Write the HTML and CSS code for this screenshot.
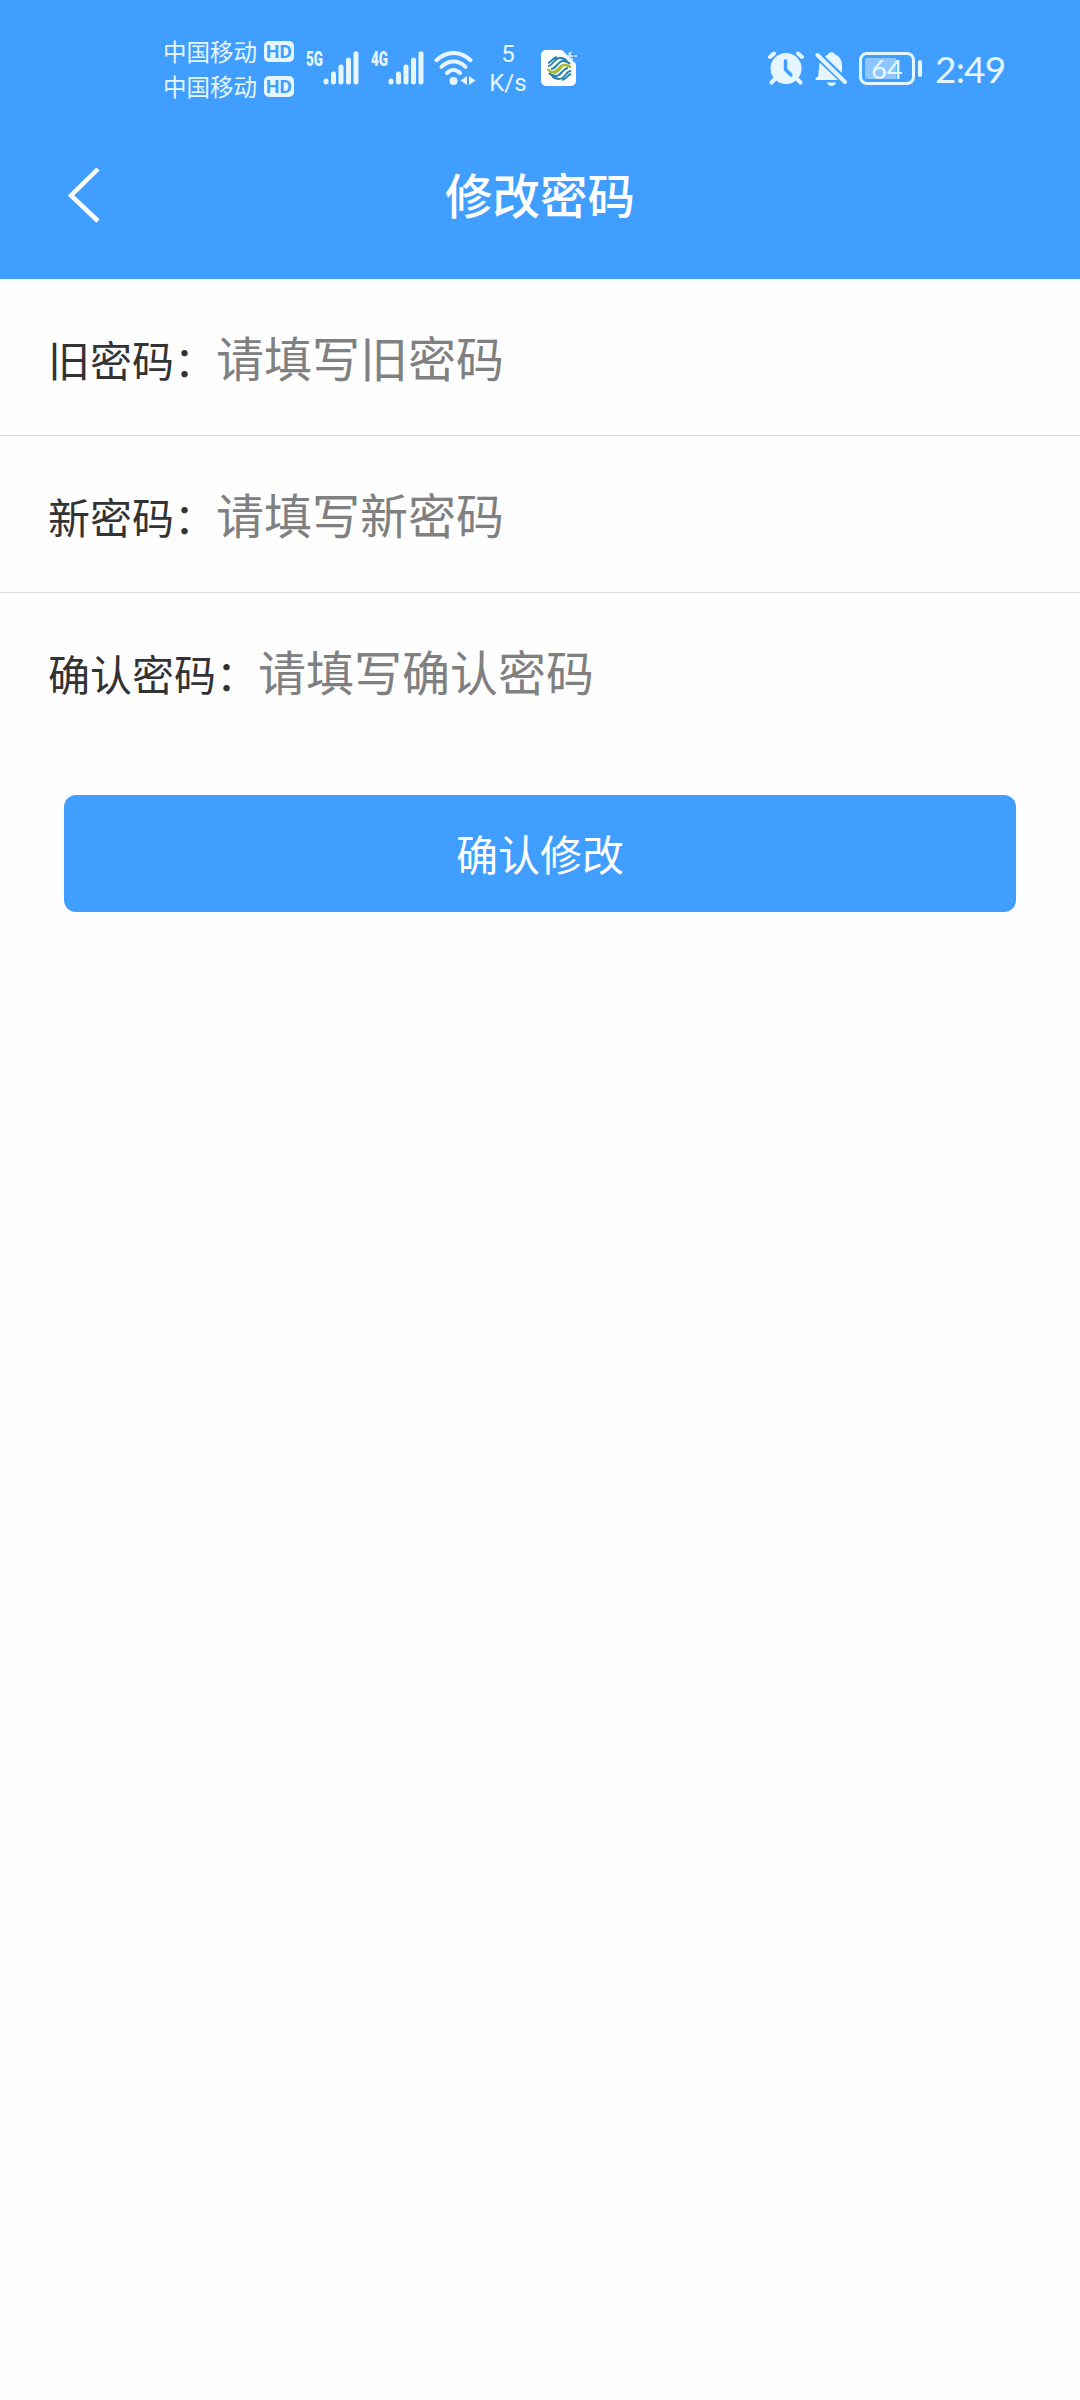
FILE: index.html
```html
<!DOCTYPE html>
<html lang="zh-CN">
<head>
<meta charset="utf-8">
<title>修改密码</title>
<link rel="stylesheet" href="styles.css">
</head>
<body>
<header class="header">
  <div class="status">
    <div class="carriers">
      <div class="carrier"><span>中国移动</span><b class="hd">HD</b></div>
      <div class="carrier"><span>中国移动</span><b class="hd">HD</b></div>
    </div>
    <div class="signal signal-5g">
      <span class="net">5G</span>
      <svg class="bars" width="36" height="34" viewBox="0 0 36 34"><path d="M3 30v1M10.500 23v8M18 16v15M25.500 9v22M33 2.800v28.200"/></svg>
    </div>
    <div class="signal signal-4g">
      <span class="net">4G</span>
      <svg class="bars" width="36" height="34" viewBox="0 0 36 34"><path d="M3 30v1M10.500 23v8M18 16v15M25.500 9v22M33 2.800v28.200"/></svg>
    </div>
    <svg class="wifi" width="42" height="34" viewBox="0 0 42 34">
      <g class="line"><path d="M2.500 9.200C13-.5 26-.5 36.500 9.200"/><path d="M7.500 15.800c7-7 17-7 24 0"/><path d="M13 22c4-4 9-4 13 0"/></g>
      <circle cx="19.500" cy="30" r="4"/><path d="M33 25v9l-6.500-4.500zM35 25v9l6.500-4.500z"/>
    </svg>
    <div class="speed"><span>5</span><span>K/s</span></div>
    <svg class="app" width="37" height="37" viewBox="0 0 37 37">
      <path fill="#fff" d="M6 0h16l14 14v17a5 5 0 0 1-5 5H6a5 5 0 0 1-5-5V5a5 5 0 0 1 5-5z"/>
      <g fill="none" stroke-width="1.900">
        <path stroke="#287fa8" d="M8 16c5 0 6-8 12-8 3 0 5 1 7 3M8 13c3 0 4-5 9-6M11 19c5 0 7-8 12-8 3 0 5 1 7 3M31 21c-5 0-6 8-12 8-3 0-5-1-7-3M31 24c-3 0-4 5-9 6M28 18c-5 0-7 8-12 8-3 0-5-1-7-3"/>
        <path stroke="#9fbd32" stroke-width="2.400" d="M8 19c2 4 6 4 9 1 4-4 5-5 8-5 3 0 4 2 6 2M13 23c5 0 6-4 9-6"/>
      </g>
      <path fill="none" stroke="#def2ff" stroke-width="1.300" d="M28 4l4-2M27 6h6M30 3v6M29 9h4M34 6h3"/>
    </svg>
    <svg class="alarm" width="36" height="34" viewBox="0 0 36 34">
      <circle cx="18" cy="17.500" r="15.500"/>
      <path class="line" d="M2 6l4-3.500M34 6l-4-3.500M7 28l-3.500 3.500M29 28l3.500 3.500"/>
      <path class="hands" d="M17.500 10v8.500l5.500 5.500"/>
    </svg>
    <svg class="bell" width="33" height="35" viewBox="0 0 33 35">
      <path d="M4.500 10.500L23 28H1.500c-1.500 0-1.500-2 0-2.500 2-1 2-2 2-5zM10 4.500c1-1 2-1.500 3-2 1-3 6-3 7 0 5 2 7 6 7 11v7.500zM12 30.500h9c-1 4.500-8 4.500-9 0z"/>
      <path class="line" d="M2.500 3L30 30"/>
    </svg>
    <div class="battery"><span class="level">64</span></div>
    <time class="clock">2:49</time>
  </div>
  <div class="nav">
    <svg class="back" width="34" height="56" viewBox="0 0 34 56"><path d="M31 2L4 28.500 31 54"/></svg>
    <h1 class="title">修改密码</h1>
  </div>
</header>
<form class="form">
  <label class="row"><span class="name">旧密码<i class="colon">：</i></span><input class="field" type="password" placeholder="请填写旧密码"></label>
  <label class="row"><span class="name">新密码<i class="colon">：</i></span><input class="field" type="password" placeholder="请填写新密码"></label>
  <label class="row"><span class="name">确认密码<i class="colon">：</i></span><input class="field" type="password" placeholder="请填写确认密码"></label>
  <button class="submit" type="button">确认修改</button>
</form>
</body>
</html>
```
FILE: styles.css
```css
* { box-sizing: border-box; }
body {
  margin: 0;
  min-height: 2400px;
  background: #fefefe;
  color: #333;
  font-family: "Noto Sans CJK SC", sans-serif;
}
svg { display: block; flex: none; }
.header { height: 279px; background: #409eff; color: #fff; }
.status {
  height: 138px;
  padding: 34px 0 0 163px;
  display: flex;
  align-items: flex-start;
  color: #e6f6ff;
  fill: #e6f6ff;
}
.status .line { fill: none; stroke: #e6f6ff; stroke-width: 4; stroke-linecap: round; }
.carriers { width: 131px; }
.carrier { height: 35px; display: flex; align-items: center; justify-content: space-between; font-size: 23.500px; line-height: 35px; }
.hd {
  width: 30px;
  height: 21px;
  border-radius: 5px;
  background: #e6f6ff;
  color: #409eff;
  font: bold 19px/21px "Roboto", sans-serif;
  text-align: center;
}
.signal { display: flex; margin-top: 17px; }
.signal-5g { margin-left: 12px; }
.signal-4g { margin-left: 12px; }
.net { width: 17px; font: 900 21px/16px "Roboto", sans-serif; white-space: nowrap; transform: scaleX(.64); transform-origin: left; }
.bars { fill: none; stroke: #e6f6ff; stroke-width: 5; stroke-linecap: round; }
.wifi { margin: 17px 0 0 10px; }
.speed { width: 44px; margin: 6px 0 0 10px; display: flex; flex-direction: column; text-align: center; font: 24px/29px "Roboto", sans-serif; }
.app { margin: 16px 0 0 10px; }
.alarm { margin: 17px 0 0 191px; }
.hands { fill: none; stroke: #409eff; stroke-width: 3.500; stroke-linecap: round; stroke-linejoin: round; }
.bell { margin: 18px 0 0 11px; }
.battery {
  position: relative;
  width: 56px;
  height: 33px;
  margin: 18px 0 0 11px;
  padding: 3px;
  border: 3px solid #e6f6ff;
  border-radius: 8px;
}
.battery::after {
  content: "";
  position: absolute;
  right: -10px;
  top: 5px;
  width: 4px;
  height: 17px;
  border-radius: 2px;
  background: #e6f6ff;
}
.level {
  display: block;
  height: 21px;
  background: linear-gradient(90deg, #8cc5ff 31px, transparent 31px);
  border-radius: 2px;
  text-align: center;
  font: 500 27px/22px "Lato", sans-serif;
}
.clock { margin: 13px 0 0 20px; font: 37px/44px "Lato", sans-serif; letter-spacing: -.8px; }
.nav { position: relative; height: 116px; display: flex; align-items: center; justify-content: center; }
.back { position: absolute; left: 67px; top: 29px; fill: none; stroke: #fff; stroke-width: 4.500; }
.title { margin: 0 0 5px; font-size: 47.500px; line-height: 70px; font-weight: 500; }
.row {
  height: 157px;
  padding: 0 48px;
  display: flex;
  align-items: center;
  border-bottom: 1px solid #d9d9d9;
  font-size: 42px;
}
.row:nth-child(3) { border-bottom-color: transparent; }
.name { flex: none; padding-top: 2px; }
.colon { display: inline-block; width: 42px; font-style: normal; }
.field { flex: 1; min-width: 0; height: 90px; margin-bottom: 3px; padding: 0; border: 0; outline: 0; background: none; font: 48px/72px "Noto Sans CJK SC", sans-serif; }
.field::placeholder { color: #808080; opacity: 1; }
.submit {
  display: block;
  width: 952px;
  height: 117px;
  margin: 45px auto 0;
  padding: 0 0 1px;
  border: 0;
  border-radius: 12px;
  background: #409eff;
  color: #fff;
  font: 42px/60px "Noto Sans CJK SC", sans-serif;
}
```
